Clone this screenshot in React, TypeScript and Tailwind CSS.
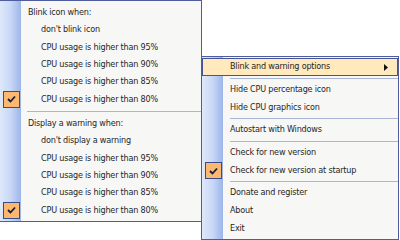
const font = "font-['DejaVu_Sans_Condensed','DejaVu_Sans',sans-serif]";

const Check = () => (
  <svg width="9" height="8" viewBox="0 0 9 8">
    <path d="M1 4 L3.5 6.5 L8 1.5" fill="none" stroke="#1b1b3a" strokeWidth="1.8" />
  </svg>
);

const CheckBox = () => (
  <div className="flex h-[17px] w-[17px] items-center justify-center border border-[#3a4a8c] bg-[#fbb86e]">
    <Check />
  </div>
);

type Row = { label: string; indent?: boolean; checked?: boolean };

const blink: Row[] = [
  { label: "Blink icon when:" },
  { label: "don't blink icon", indent: true },
  { label: "CPU usage is higher than 95%", indent: true },
  { label: "CPU usage is higher than 90%", indent: true },
  { label: "CPU usage is higher than 85%", indent: true },
  { label: "CPU usage is higher than 80%", indent: true, checked: true },
];

const warn: Row[] = [
  { label: "Display a warning when:" },
  { label: "don't display a warning", indent: true },
  { label: "CPU usage is higher than 95%", indent: true },
  { label: "CPU usage is higher than 90%", indent: true },
  { label: "CPU usage is higher than 85%", indent: true },
  { label: "CPU usage is higher than 80%", indent: true, checked: true },
];

const LeftRow = ({ row }: { row: Row }) => (
  <div className="flex h-[17.33px] items-center">
    <div className="flex w-[21px] shrink-0 justify-center pl-[1px]">{row.checked && <CheckBox />}</div>
    <span className={row.indent ? "pl-[20px]" : "pl-[7px]"}>{row.label}</span>
  </div>
);

const RightRow = ({ label, checked, active, sub }: { label: string; checked?: boolean; active?: boolean; sub?: boolean }) => (
  <div
    className={
      "flex h-[18px] items-center " +
      (active ? "border border-[#46549a] bg-[#ffe9bd]" : "")
    }
  >
    <div className="flex w-[21px] shrink-0 justify-center pl-[2px]">{checked && <CheckBox />}</div>
    <span className={active ? "flex-1 pl-[6px]" : "flex-1 pl-[7px]"}>{label}</span>
    {sub && (
      <svg width="4" height="7" viewBox="0 0 4 7" className="mr-[9px]">
        <path d="M0 0 L4 3.5 L0 7 Z" fill="#111" />
      </svg>
    )}
  </div>
);

const Sep = ({ h, left }: { h: string; left: string }) => (
  <div className={"flex items-center " + h}>
    <div className={"h-full shrink-0 " + left} />
    <div className="h-px flex-1 bg-[#a9b5d4]" />
  </div>
);

export default function App() {
  return (
    <div className={"flex h-[240px] w-[400px] items-start bg-white text-[9px] tracking-[-0.2px] text-[#262626] " + font}>
      {/* main popup */}
      <div className="relative h-[222px] w-[202px] shrink-0 border-y border-r border-[#4f5d9c] bg-[#f7f7f6] pt-[3px]">
        <div className="absolute inset-y-0 left-0 w-[21px] bg-gradient-to-r from-[#dfe8fb] via-[#c9d8f6] to-[#9db5e9]" />
        <div className="relative">
          {blink.map((r, i) => (
            <LeftRow key={i} row={r} />
          ))}
          <Sep h="h-[7px]" left="w-[27px]" />
          {warn.map((r, i) => (
            <LeftRow key={i} row={r} />
          ))}
        </div>
      </div>

      {/* submenu */}
      <div className="relative -ml-px mt-[56px] h-[184px] w-[198px] shrink-0 border border-[#4f5d9c] bg-[#f7f7f6] pt-px">
        <div className="absolute inset-y-0 left-0 w-[21px] bg-gradient-to-r from-[#dfe8fb] via-[#c9d8f6] to-[#9db5e9]" />
        <div className="relative">
          <RightRow label="Blink and warning options" active sub />
          <Sep h="h-[4.5px]" left="w-[28px]" />
          <RightRow label="Hide CPU percentage icon" />
          <RightRow label="Hide CPU graphics icon" />
          <Sep h="h-[4.5px]" left="w-[28px]" />
          <RightRow label="Autostart with Windows" />
          <Sep h="h-[4.5px]" left="w-[28px]" />
          <RightRow label="Check for new version" />
          <RightRow label="Check for new version at startup" checked />
          <Sep h="h-[4.5px]" left="w-[28px]" />
          <RightRow label="Donate and register" />
          <RightRow label="About" />
          <RightRow label="Exit" />
        </div>
      </div>
    </div>
  );
}
